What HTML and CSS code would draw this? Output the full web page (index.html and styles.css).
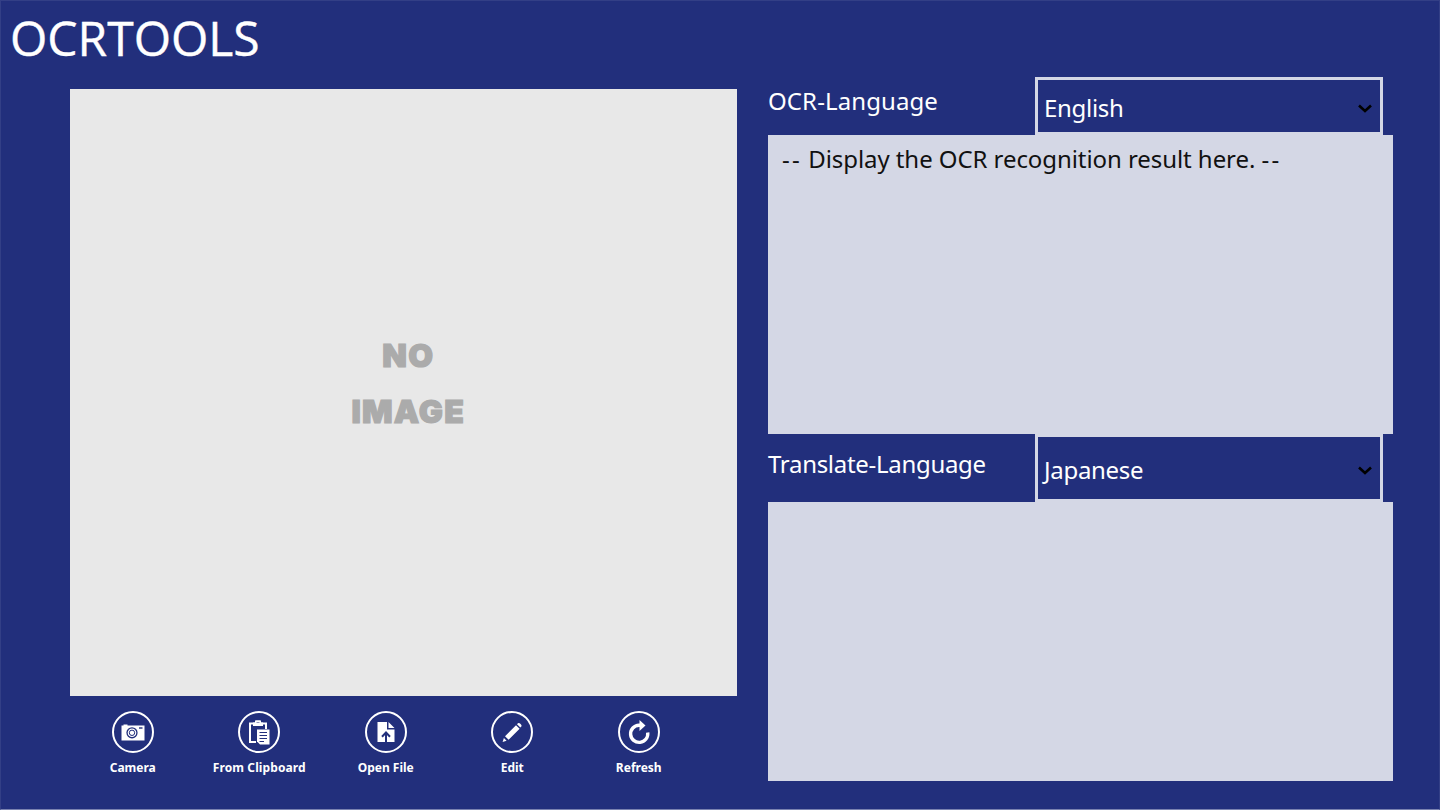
FILE: index.html
```html
<!DOCTYPE html>
<html lang="en">
<head>
  <meta charset="UTF-8" />
  <meta name="viewport" content="width=device-width, initial-scale=1.0" />
  <title>OCRTOOLS</title>
  <link rel="stylesheet" href="styles.css">
</head>
<body>
  <header><h1>OCRTOOLS</h1></header>

  <main>
    <section class="source">
      <div class="preview">
        <span class="no">NO</span>
        <span class="image">IMAGE</span>
      </div>

      <nav class="appbar">
        <a class="camera">
          <svg class="icon" viewBox="0 0 42 42">
            <circle class="ring" cx="21" cy="21" r="20"/>
            <path fill="#fff" d="M9.500 14.500h2v-1h4v1h17v15h-23z"/>
            <circle cx="20" cy="21.800" r="5.600" fill="#222f7c"/>
            <circle cx="20" cy="21.800" r="4.300" fill="#fff"/>
            <circle cx="20" cy="21.800" r="2.700" fill="none" stroke="#222f7c" stroke-width="1"/>
            <path fill="#222f7c" d="M27 16.300h3.500v1.400H27z"/>
          </svg>
          <span>Camera</span>
        </a>
        <a class="clipboard">
          <svg class="icon" viewBox="0 0 42 42">
            <circle class="ring" cx="21" cy="21" r="20"/>
            <path fill="none" stroke="#fff" stroke-width="2" d="M18 31H12V12.500h16V18"/>
            <path fill="#fff" fill-rule="evenodd" d="M15 15v-3.500h2V10q0-.8.800-.8h4.400q.8 0 .8.800v1.500h2V15zM18.500 11h3v1.500h-3z"/>
            <path fill="#fff" d="M19 18.500h12.500V33.500H22l-3-3z"/>
            <path stroke="#222f7c" stroke-width="1.200" d="M21.500 21.500h7.500M21.500 24.500h7.500M21.500 27.500h7.500M21.500 30.500h4.500"/>
          </svg>
          <span>From Clipboard</span>
        </a>
        <a class="open">
          <svg class="icon" viewBox="0 0 42 42">
            <circle class="ring" cx="21" cy="21" r="20"/>
            <path fill="#fff" d="M12.500 11H22v7.500h7.500v12.500h-17zM23.500 11l6 6h-6z"/>
            <path fill="none" stroke="#222f7c" stroke-width="2" d="M21 31v-9M17 25.700l4-4.200 4 4.200"/>
          </svg>
          <span>Open File</span>
        </a>
        <a class="edit">
          <svg class="icon" viewBox="0 0 42 42">
            <circle class="ring" cx="21" cy="21" r="20"/>
            <path fill="#fff" d="M25 14.200l3.600 3.600L17.600 28.800 14 25.200zM26 13.200l.9-.9q1.200-.8 2.700.6 1.500 1.500.7 2.700l-1 1zM12.900 27l2.700 2.700-4 1.300z"/>
          </svg>
          <span>Edit</span>
        </a>
        <a class="refresh">
          <svg class="icon" viewBox="0 0 42 42">
            <circle class="ring" cx="21" cy="21" r="20"/>
            <path fill="none" stroke="#fff" stroke-width="3.400" d="M22.500 14.200h-1.500a8.600 8.600 0 1 0 8.700 7.300"/>
            <path fill="#fff" d="M21.500 9l6 5.500-6 5.500z"/>
          </svg>
          <span>Refresh</span>
        </a>
      </nav>
    </section>

    <section class="result">
      <div class="row ocr">
        <label>OCR-Language</label>
        <div class="combo">
          <span>English</span>
          <svg class="arrow" viewBox="0 0 14 9"><path d="M1 1.500l6 5.500 6-5.500"/></svg>
        </div>
      </div>
      <div class="panel first"><p><span class="dash">--</span> Display the OCR recognition result here. <span class="dash">--</span></p></div>
      <div class="row translate">
        <label>Translate-Language</label>
        <div class="combo">
          <span>Japanese</span>
          <svg class="arrow" viewBox="0 0 14 9"><path d="M1 1.500l6 5.500 6-5.500"/></svg>
        </div>
      </div>
      <div class="panel second"></div>
    </section>
  </main>
</body>
</html>
```
FILE: styles.css
```css
* {
  box-sizing: border-box;
}
body {
  margin: 0;
  height: 810px;
  overflow: hidden;
  background: #222f7c;
  border: 1px solid #333f86;
  border-bottom-color: #7a82b0;
  color: #fff;
  font-family: "Noto Sans", "Open Sans", sans-serif;
}
header {
  height: 76px;
  padding: 3px 0 0 9px;
}
h1 {
  margin: 0;
  font-size: 48px;
  line-height: 68px;
  font-weight: 400;
  font-family: "Open Sans", sans-serif;
  -webkit-text-stroke: 0.4px #fff;
}
main {
  display: flex;
  padding-left: 68.5px;
}
.source {
  width: 667.5px;
  margin: 11.5px 31px 0 0;
}
.preview {
  height: 607px;
  background: #e8e8e8;
  color: #ababab;
  display: flex;
  flex-direction: column;
  align-items: center;
  justify-content: center;
  padding: 0 0 17px 10px;
  font-family: Inter, sans-serif;
  font-size: 32px;
  font-weight: 900;
  line-height: 56px;
  letter-spacing: 1.2px;
  -webkit-text-stroke: 1.2px #ababab;
}
.appbar {
  display: flex;
  padding-top: 15px;
}
.appbar a {
  width: 126.5px;
  display: flex;
  flex-direction: column;
  align-items: center;
  font-size: 12px;
  line-height: 16px;
  font-weight: 700;
  white-space: nowrap;
}
.appbar span {
  margin-top: 7px;
}
.appbar .clipboard span {
  letter-spacing: 0.1px;
}
.icon {
  width: 42px;
  height: 42px;
}
.ring {
  fill: none;
  stroke: #fff;
  stroke-width: 2;
}
.result {
  width: 625px;
}
.row {
  display: flex;
  font-size: 24px;
  line-height: 34px;
}
.row label {
  width: 267px;
}
.ocr {
  height: 58px;
}
.ocr label {
  padding-top: 7px;
  letter-spacing: 0.1px;
}
.translate {
  height: 68px;
}
.translate label {
  padding-top: 13px;
  letter-spacing: -0.3px;
}
.combo {
  width: 348px;
  display: flex;
  align-items: center;
  justify-content: space-between;
  border: 3px solid #d4d7e5;
  padding: 4px 8px 0 6px;
}
.combo span {
  letter-spacing: -0.3px;
}
.arrow {
  width: 14px;
  height: 9px;
  fill: none;
  stroke: #000;
  stroke-width: 2.6;
}
.panel {
  background: #d4d7e5;
  color: #111;
  font-size: 24px;
  line-height: 34px;
}
.panel p {
  margin: 0;
  padding: 7px 14px;
  white-space: nowrap;
  letter-spacing: -0.07px;
}
.panel .dash {
  letter-spacing: 2.3px;
}
.first {
  height: 299px;
}
.second {
  height: 279px;
}
```
